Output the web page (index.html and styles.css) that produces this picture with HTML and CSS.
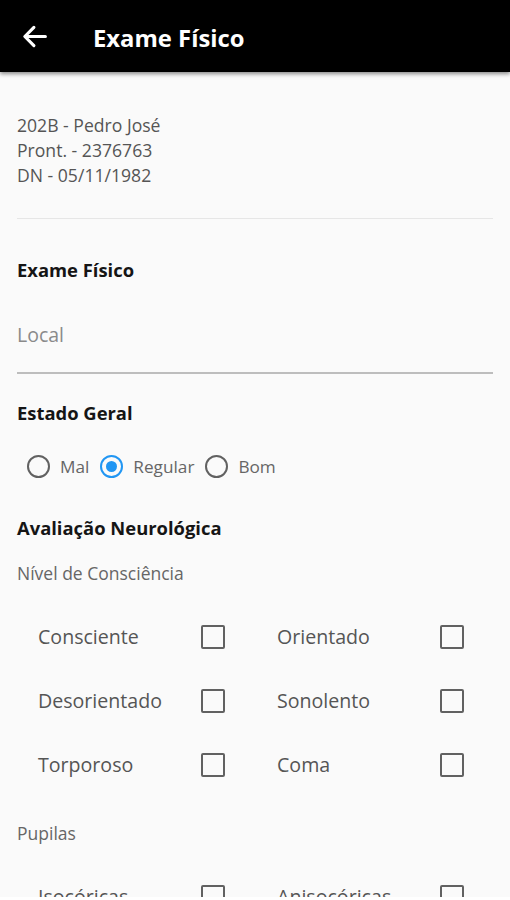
FILE: index.html
```html
<!DOCTYPE html>
<html lang="pt">
<head>
<meta charset="utf-8">
<title>Exame Físico</title>
<link rel="stylesheet" href="styles.css">
</head>
<body>
<div class="screen">
<header class="appbar">
  <svg class="back" viewBox="0 0 24 24" width="24" height="24" aria-hidden="true">
    <path d="M21 12H4.5M11.5 4.5L4 12l7.5 7.5" fill="none" stroke="#fff" stroke-width="2.6" stroke-linecap="round" stroke-linejoin="round"/>
  </svg>
  <h1 class="title">Exame Físico</h1>
</header>
<main class="content">
  <div class="patient">
    <div>202B - Pedro José</div>
    <div>Pront. - 2376763</div>
    <div>DN - 05/11/1982</div>
  </div>
  <hr class="divider">
  <h2 class="section first">Exame Físico</h2>
  <div class="field"><span class="placeholder">Local</span></div>
  <h2 class="section estado">Estado Geral</h2>
  <div class="radios">
    <label class="radio-item"><span class="radio"></span><span class="rlabel">Mal</span></label>
    <label class="radio-item"><span class="radio on"></span><span class="rlabel">Regular</span></label>
    <label class="radio-item"><span class="radio"></span><span class="rlabel">Bom</span></label>
  </div>
  <h2 class="section neuro">Avaliação Neurológica</h2>
  <div class="sub nivel">Nível de Consciência</div>
  <div class="checks">
    <div class="check-cell"><span class="clabel">Consciente</span><span class="box"></span></div>
    <div class="check-cell"><span class="clabel">Orientado</span><span class="box"></span></div>
    <div class="check-cell"><span class="clabel">Desorientado</span><span class="box"></span></div>
    <div class="check-cell"><span class="clabel">Sonolento</span><span class="box"></span></div>
    <div class="check-cell"><span class="clabel">Torporoso</span><span class="box"></span></div>
    <div class="check-cell"><span class="clabel">Coma</span><span class="box"></span></div>
  </div>
  <div class="sub pupilas">Pupilas</div>
  <div class="checks last">
    <div class="check-cell"><span class="clabel">Isocóricas</span><span class="box"></span></div>
    <div class="check-cell"><span class="clabel">Anisocóricas</span><span class="box"></span></div>
  </div>
</main>
</div>
</body>
</html>
```
FILE: styles.css
```css
* { box-sizing: border-box; }
html, body { margin: 0; padding: 0; background: #fff; }
body {
  font-family: "Open Sans", "Noto Sans", sans-serif;
  color: #555;
}
.screen {
  background: #fafafa;
  height: 897px;
  overflow: hidden;
}
.appbar {
  height: 72px;
  background: #000;
  display: flex;
  align-items: center;
  padding-left: 20px;
  box-shadow: 0 2px 4px rgba(0,0,0,0.45);
  position: relative;
  z-index: 1;
}
.back { width: 29px; height: 29px; display: block; }
.title {
  margin: 0 0 0 44px;
  font-size: 23.8px;
  font-weight: 700;
  color: #fff;
  line-height: 30px;
  padding-top: 4px;
}
.content { padding: 0 17px; }
.patient {
  margin-top: 41px;
  font-size: 17.6px;
  line-height: 25px;
  color: #555;
}
.divider {
  margin: 30px 0 0;
  border: 0;
  height: 1px;
  background: #e6e6e6;
}
.section {
  margin: 0;
  font-size: 18.4px;
  font-weight: 700;
  line-height: 24px;
  color: #151515;
}
.section.first { margin-top: 39px; }
.field {
  padding-top: 41px;
  padding-bottom: 24px;
  border-bottom: 2px solid #bdbdbd;
  line-height: 24px;
}
.placeholder { font-size: 19.5px; color: #8a8a8a; }
.section.estado { margin-top: 27px; }
.radios {
  margin-top: 29px;
  display: flex;
  align-items: center;
  padding-left: 10px;
  height: 24px;
}
.radio-item { display: flex; align-items: center; margin-right: 11px; }
.radio {
  width: 23px; height: 23px;
  border: 2px solid #616161;
  border-radius: 50%;
  display: flex;
  align-items: center;
  justify-content: center;
}
.radio.on { border-color: #2196f3; }
.radio.on::after {
  content: "";
  width: 11px; height: 11px;
  border-radius: 50%;
  background: #2196f3;
}
.rlabel { margin-left: 10px; font-size: 17.2px; color: #666; }
.section.neuro { margin-top: 38px; }
.sub { font-size: 17.5px; color: #666; line-height: 24px; }
.sub.nivel { margin-top: 21px; }
.checks {
  margin-top: 20px;
  display: grid;
  grid-template-columns: 239px 239px;
  grid-auto-rows: 64px;
  padding-left: 21px;
}
.check-cell { display: flex; align-items: center; }
.clabel { width: 163px; font-size: 19.6px; color: #555; position: relative; top: -1px; }
.box {
  width: 24px; height: 24px;
  border: 2px solid #616161;
  border-radius: 2px;
}
.sub.pupilas { margin-top: 24px; }
.checks.last { margin-top: 20px; }
```
